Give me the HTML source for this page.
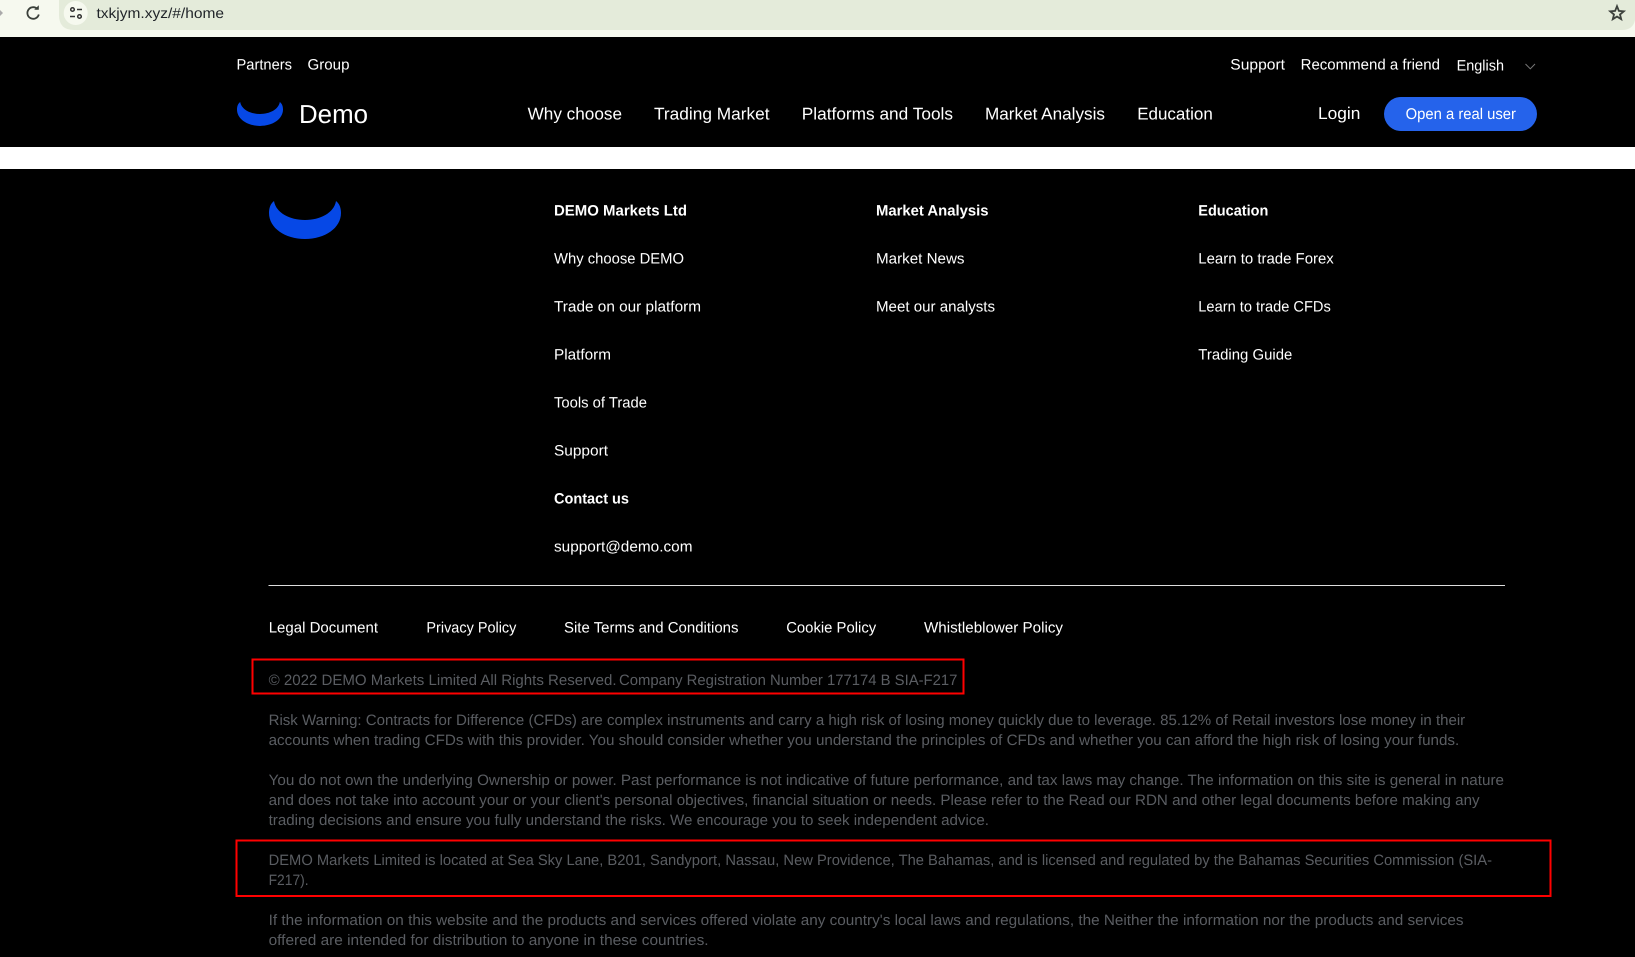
<!DOCTYPE html>
<html lang="en">
<head>
<meta charset="utf-8">
<title>Demo</title>
<style>
html,body{margin:0;padding:0;background:#000;width:1635px;height:957px;overflow:hidden}
svg{display:block;position:absolute;left:0;top:0}
text{font-family:"Liberation Sans",sans-serif;fill:#fff;text-rendering:geometricPrecision;white-space:pre}
.t{font-size:15px}
.b{font-size:15px;font-weight:700}
.n{font-size:17px}
.g{font-size:15px;fill:#5a5d62}
</style>
</head>
<body>
<svg width="1635" height="957" viewBox="0 0 1635 957" xmlns="http://www.w3.org/2000/svg">
  <!-- browser chrome -->
  <rect x="0" y="0" width="1635" height="37" fill="#f6f9ef"/>
  <path d="M59 0H1635V20Q1633 30 1622 30H74Q59 30 59 15Z" fill="#e4ebda"/>
  <circle cx="75.7" cy="13" r="12" fill="#f6f9ef"/>
  <path d="M0 10L3 13L0 16Z" fill="#aaa"/>
  <path d="M37.6 9.2A5.8 5.8 0 1 0 38.8 14.5" fill="none" stroke="#3a403a" stroke-width="1.8"/>
  <path d="M34.2 9.8H38.8V5.2Z" fill="#3a403a"/>
  <g fill="none" stroke="#333" stroke-width="1.5">
    <circle cx="72.5" cy="9.5" r="1.8"/>
    <path d="M77 9.5H82"/>
    <path d="M70 16.5H75"/>
    <circle cx="79.5" cy="16.5" r="1.8"/>
  </g>
  <text x="96.5" y="18" font-size="14.5" textLength="127.5" lengthAdjust="spacingAndGlyphs" style="fill:#1f2328">txkjym.xyz/#/home</text>
  <path d="M1617 6.2L1618.9 10.9L1623.8 11.3L1620 14.5L1621.2 19.2L1617 16.6L1612.8 19.2L1614 14.5L1610.2 11.3L1615.1 10.9Z" fill="none" stroke="#3d423d" stroke-width="1.8" stroke-linejoin="miter"/>

  <!-- white band -->
  <rect x="0" y="147" width="1635" height="22" fill="#fff"/>

  <!-- header top -->
  <text class="t" x="236.5" y="69.5" textLength="55.5" lengthAdjust="spacingAndGlyphs">Partners</text>
  <text class="t" x="307.5" y="69.5" textLength="42" lengthAdjust="spacingAndGlyphs">Group</text>
  <text class="t" x="1230.3" y="69.5" textLength="54.7" lengthAdjust="spacingAndGlyphs">Support</text>
  <text class="t" x="1300.6" y="69.5" textLength="139.4" lengthAdjust="spacingAndGlyphs">Recommend a friend</text>
  <text class="t" x="1456.6" y="70.5" textLength="47.4" lengthAdjust="spacingAndGlyphs">English</text>
  <path d="M1525.5 64L1530.3 68.8L1535 64" fill="none" stroke="#777" stroke-width="1"/>

  <!-- logo + brand -->
  <path transform="translate(237 102) scale(.639 .63) translate(-269 -201)" d="M274 201C270 204 269 209 269 213C269 228 285 239 305 239C325 239 341 228 341 213C341 209 340 204 336 201C334 213 320 220 305 220C290 220 276 213 274 201Z" fill="#0648e6"/>
  <text x="299" y="123" font-size="26" textLength="69" lengthAdjust="spacingAndGlyphs">Demo</text>

  <!-- nav -->
  <text class="n" x="527.6" y="119.5" textLength="94.4" lengthAdjust="spacingAndGlyphs">Why choose</text>
  <text class="n" x="654" y="119.5" textLength="115.5" lengthAdjust="spacingAndGlyphs">Trading Market</text>
  <text class="n" x="801.8" y="119.5" textLength="151.2" lengthAdjust="spacingAndGlyphs">Platforms and Tools</text>
  <text class="n" x="985" y="119.5" textLength="120" lengthAdjust="spacingAndGlyphs">Market Analysis</text>
  <text class="n" x="1137.2" y="119.5" textLength="75.6" lengthAdjust="spacingAndGlyphs">Education</text>
  <text class="n" x="1318" y="119" textLength="42.4" lengthAdjust="spacingAndGlyphs">Login</text>
  <rect x="1384" y="97" width="153" height="34" rx="17" fill="#2563eb"/>
  <text x="1405.6" y="119" font-size="15.5" textLength="110.4" lengthAdjust="spacingAndGlyphs">Open a real user</text>

  <!-- footer logo -->
  <path d="M274 201C270 204 269 209 269 213C269 228 285 239 305 239C325 239 341 228 341 213C341 209 340 204 336 201C334 213 320 220 305 220C290 220 276 213 274 201Z" fill="#0648e6"/>

  <!-- footer col 1 -->
  <text class="b" x="554" y="215.6" textLength="133" lengthAdjust="spacingAndGlyphs">DEMO Markets Ltd</text>
  <text class="t" x="554" y="263.6" textLength="130" lengthAdjust="spacingAndGlyphs">Why choose DEMO</text>
  <text class="t" x="554" y="311.6" textLength="147" lengthAdjust="spacingAndGlyphs">Trade on our platform</text>
  <text class="t" x="554" y="359.6" textLength="57" lengthAdjust="spacingAndGlyphs">Platform</text>
  <text class="t" x="554" y="407.6" textLength="93" lengthAdjust="spacingAndGlyphs">Tools of Trade</text>
  <text class="t" x="554" y="455.6" textLength="54" lengthAdjust="spacingAndGlyphs">Support</text>
  <text class="b" x="554" y="503.6" textLength="75" lengthAdjust="spacingAndGlyphs">Contact us</text>
  <text class="t" x="554" y="551.6" textLength="138.5" lengthAdjust="spacingAndGlyphs">support@demo.com</text>

  <!-- footer col 2 -->
  <text class="b" x="876" y="215.6" textLength="112.5" lengthAdjust="spacingAndGlyphs">Market Analysis</text>
  <text class="t" x="876" y="263.6" textLength="88.5" lengthAdjust="spacingAndGlyphs">Market News</text>
  <text class="t" x="876" y="311.6" textLength="119" lengthAdjust="spacingAndGlyphs">Meet our analysts</text>

  <!-- footer col 3 -->
  <text class="b" x="1198.3" y="215.6" textLength="70" lengthAdjust="spacingAndGlyphs">Education</text>
  <text class="t" x="1198.3" y="263.6" textLength="135.5" lengthAdjust="spacingAndGlyphs">Learn to trade Forex</text>
  <text class="t" x="1198.3" y="311.6" textLength="132.5" lengthAdjust="spacingAndGlyphs">Learn to trade CFDs</text>
  <text class="t" x="1198.3" y="359.6" textLength="94" lengthAdjust="spacingAndGlyphs">Trading Guide</text>

  <rect x="268.5" y="585" width="1236.5" height="1" fill="#ddd"/>

  <!-- legal row -->
  <text class="t" x="268.7" y="632.6" textLength="109.3" lengthAdjust="spacingAndGlyphs">Legal Document</text>
  <text class="t" x="426.4" y="632.6" textLength="90" lengthAdjust="spacingAndGlyphs">Privacy Policy</text>
  <text class="t" x="564" y="632.6" textLength="174.5" lengthAdjust="spacingAndGlyphs">Site Terms and Conditions</text>
  <text class="t" x="786.2" y="632.6" textLength="90" lengthAdjust="spacingAndGlyphs">Cookie Policy</text>
  <text class="t" x="924" y="632.6" textLength="139" lengthAdjust="spacingAndGlyphs">Whistleblower Policy</text>

  <!-- disclaimer -->
  <text class="g" x="268.6" y="685" textLength="348" lengthAdjust="spacingAndGlyphs">© 2022 DEMO Markets Limited All Rights Reserved.</text>
  <text class="g" x="619" y="685" textLength="338.4" lengthAdjust="spacingAndGlyphs">Company Registration Number 177174 B SIA-F217</text>
  <text class="g" x="268.6" y="725" textLength="1196.6" lengthAdjust="spacingAndGlyphs">Risk Warning: Contracts for Difference (CFDs) are complex instruments and carry a high risk of losing money quickly due to leverage. 85.12% of Retail investors lose money in their</text>
  <text class="g" x="268.6" y="745" textLength="1190.6" lengthAdjust="spacingAndGlyphs">accounts when trading CFDs with this provider. You should consider whether you understand the principles of CFDs and whether you can afford the high risk of losing your funds.</text>
  <text class="g" x="268.6" y="785" textLength="1235.4" lengthAdjust="spacingAndGlyphs">You do not own the underlying Ownership or power. Past performance is not indicative of future performance, and tax laws may change. The information on this site is general in nature</text>
  <text class="g" x="268.6" y="805" textLength="1211" lengthAdjust="spacingAndGlyphs">and does not take into account your or your client's personal objectives, financial situation or needs. Please refer to the Read our RDN and other legal documents before making any</text>
  <text class="g" x="268.6" y="825" textLength="720.4" lengthAdjust="spacingAndGlyphs">trading decisions and ensure you fully understand the risks. We encourage you to seek independent advice.</text>
  <text class="g" x="268.6" y="865" textLength="1223.4" lengthAdjust="spacingAndGlyphs">DEMO Markets Limited is located at Sea Sky Lane, B201, Sandyport, Nassau, New Providence, The Bahamas, and is licensed and regulated by the Bahamas Securities Commission (SIA-</text>
  <text class="g" x="268.6" y="885" textLength="40" lengthAdjust="spacingAndGlyphs">F217).</text>
  <text class="g" x="268.6" y="925" textLength="1195" lengthAdjust="spacingAndGlyphs">If the information on this website and the products and services offered violate any country's local laws and regulations, the Neither the information nor the products and services</text>
  <text class="g" x="268.6" y="945" textLength="440" lengthAdjust="spacingAndGlyphs">offered are intended for distribution to anyone in these countries.</text>

  <!-- red annotation boxes -->
  <rect x="252.5" y="659.5" width="711" height="34" fill="none" stroke="#f00" stroke-width="2"/>
  <rect x="236.5" y="840.5" width="1314" height="55.5" fill="none" stroke="#f00" stroke-width="2"/>
</svg>
</body>
</html>
